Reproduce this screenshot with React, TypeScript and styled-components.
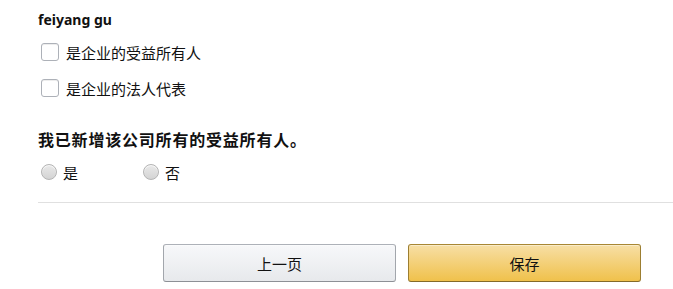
import * as React from 'react';
import styled, { createGlobalStyle } from 'styled-components';

const GlobalStyle = createGlobalStyle`
  html, body {
    margin: 0;
    padding: 0;
    background: #fff;
    color: #111;
    font-family: "Noto Sans", "Noto Sans CJK SC", sans-serif;
  }
`

const Page = styled.div`
  padding: 10px 0 0 38px;
`

const Name = styled.div`
  font-size: 14px;
  font-weight: 700;
  line-height: 20px;
  margin-bottom: 4px;
`

const CheckRow = styled.label`
  display: flex;
  align-items: center;
  gap: 7px;
  height: 36px;
  padding-left: 3px;
  font-size: 15px;
  font-family: "Noto Sans CJK SC", sans-serif;
  color: #111;
`

const Box = styled.span`
  width: 16px;
  height: 16px;
  border: 1px solid #adb1b8;
  border-radius: 3px;
  background: #fff;
  box-shadow: 0 1px 0 rgba(255, 255, 255, 0.5), 0 1px 0 rgba(0, 0, 0, 0.07) inset;
`

const Question = styled.div`
  margin-top: 21px;
  font-family: "Noto Sans CJK SC", sans-serif;
  font-size: 16px;
  font-weight: 700;
  line-height: 24px;
  letter-spacing: 0.8px;
`

const RadioGroup = styled.div`
  display: flex;
  height: 24px;
  margin-top: 9px;
  padding-left: 3px;
`

const RadioLabel = styled.label`
  display: flex;
  align-items: center;
  gap: 6px;
  width: 102px;
  font-family: "Noto Sans CJK SC", sans-serif;
  font-size: 15px;
  color: #111;
`

const Dot = styled.span`
  width: 14px;
  height: 14px;
  border-radius: 50%;
  border: 1px solid #b4b4b4;
  background: linear-gradient(to bottom, #e9e9e9, #d4d4d4);
  box-shadow: 0 1px 1px rgba(255, 255, 255, 0.8) inset;
`

const Divider = styled.hr`
  margin: 18px 0 0;
  border: 0;
  height: 1px;
  background: #e0e0e0;
`

const Actions = styled.div`
  display: flex;
  justify-content: flex-end;
  gap: 12px;
  margin-top: 41px;
  padding-right: 32px;
`

const Button = styled.button<{ $primary?: boolean }>`
  width: 233px;
  height: 38px;
  border-radius: 3px;
  border: 1px solid;
  border-color: ${p => p.$primary ? '#a88734 #9c7e31 #846a29' : '#adb1b8 #a2a6ac #8d9096'};
  background: ${p => p.$primary
    ? 'linear-gradient(to bottom, #f7dfa5, #f0c14b)'
    : 'linear-gradient(to bottom, #f7f8fa, #e7e9ec)'};
  box-shadow: 0 1px 0 rgba(255, 255, 255, 0.4) inset;
  font-family: "Noto Sans CJK SC", sans-serif;
  font-size: 15px;
  color: #111;
  cursor: pointer;
`

export default function App() {
  return (
    <>
      <GlobalStyle />
      <Page>
        <Name>feiyang gu</Name>
        <CheckRow><Box />是企业的受益所有人</CheckRow>
        <CheckRow><Box />是企业的法人代表</CheckRow>
        <Question>我已新增该公司所有的受益所有人。</Question>
        <RadioGroup>
          <RadioLabel><Dot />是</RadioLabel>
          <RadioLabel><Dot />否</RadioLabel>
        </RadioGroup>
        <Divider />
        <Actions>
          <Button>上一页</Button>
          <Button $primary>保存</Button>
        </Actions>
      </Page>
    </>
  )
}
